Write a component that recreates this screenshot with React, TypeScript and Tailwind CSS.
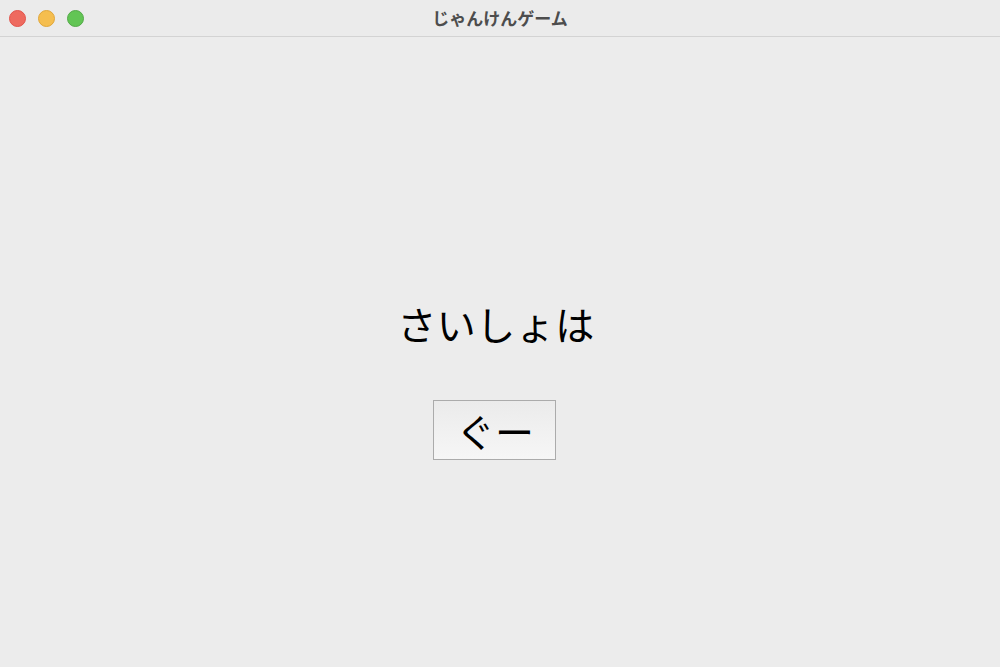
const jp = "font-['Noto_Sans_CJK_JP','Noto_Sans',sans-serif]"

function TrafficLights() {
  return (
    <div className="flex items-center gap-[12px] pl-[9px]">
      <span className="size-[17px] rounded-full border border-[#e2534b] bg-[#ee6a5f]" />
      <span className="size-[17px] rounded-full border border-[#e0a63a] bg-[#f5be4f]" />
      <span className="size-[17px] rounded-full border border-[#53a948] bg-[#62c554]" />
    </div>
  )
}

export default function App() {
  return (
    <div className={`flex h-[667px] w-[1000px] flex-col overflow-hidden bg-[#ececec] ${jp}`}>
      <div className="relative flex h-[37px] shrink-0 items-center border-b border-[#d3d3d3] bg-[#ebebeb]">
        <TrafficLights />
        <div className="pointer-events-none absolute inset-0 flex items-center justify-center">
          <span className="text-[17px] font-bold text-[#4d4d4d]">じゃんけんゲーム</span>
        </div>
      </div>

      <main className="flex flex-1 flex-col items-center pt-[267px]">
        <p className="mr-[8px] text-[39px] leading-none tracking-[0.5px] text-black">さいしょは</p>
        <button
          type="button"
          className="mt-[57px] ml-[-12px] flex h-[60px] w-[123px] items-center justify-center border border-[#ababab] bg-gradient-to-b from-[#ebebeb] to-[#f6f6f6] pl-[2px] text-[39px] leading-none text-black"
        >
          ぐー
        </button>
      </main>
    </div>
  )
}
